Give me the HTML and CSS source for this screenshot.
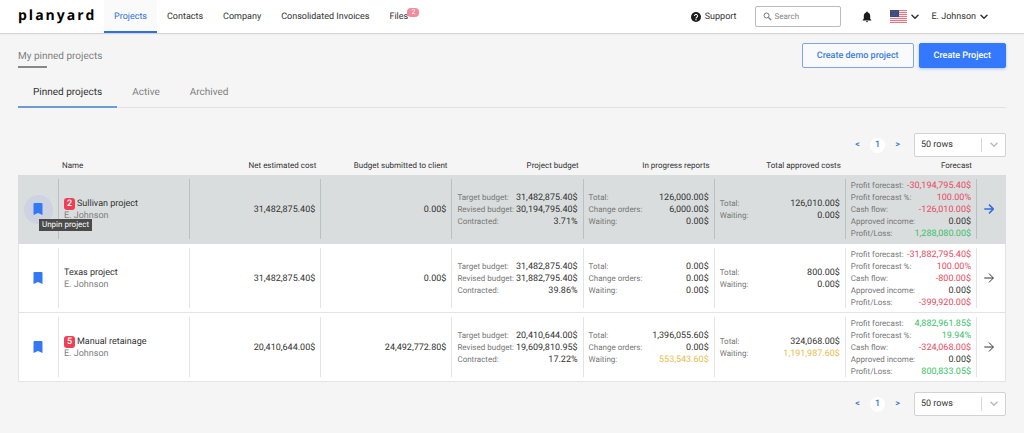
FILE: index.html
```html
<!DOCTYPE html>
<html lang="en">
<head>
  <meta charset="UTF-8" />
  <meta name="viewport" content="width=device-width, initial-scale=1" />
  <title>Planyard - Projects</title>
  <link rel="stylesheet" href="styles.css">
</head>
<body>
  <!-- shared icons -->
  <svg class="sprite" aria-hidden="true">
    <symbol id="bookmark" viewBox="0 0 10 12"><path d="M1.500 0h7A1 1 0 0 1 9.500 1v11L5 10 .5 12V1a1 1 0 0 1 1-1z" fill="#3478f6" /></symbol>
    <symbol id="arrow" viewBox="0 0 10 10"><path d="M.3 5h9M5 .6 9.400 5 5 9.400" fill="none" stroke="currentColor" /></symbol>
    <symbol id="chevron" viewBox="0 0 8 6"><path d="M1 1.200 4 4.200l3-3" fill="none" stroke="currentColor" stroke-width="1.500" stroke-linecap="round" stroke-linejoin="round" /></symbol>
  </svg>

  <header class="topbar">
    <a class="logo" href="#">planyard</a>
    <nav class="menu">
      <a class="active" href="#">Projects</a>
      <a href="#">Contacts</a>
      <a href="#">Company</a>
      <a href="#">Consolidated Invoices</a>
      <a class="files" href="#">Files<span class="count">2</span></a>
    </nav>
    <div class="tools">
      <a class="support" href="#">
        <svg width="10" height="10" viewBox="0 0 10 10"><circle cx="5" cy="5" r="5" fill="#1c1c1c" /><path d="M3.500 3.900a1.500 1.500 0 1 1 2.300 1.300C5.200 5.600 5 5.800 5 6.400" fill="none" stroke="#fff" stroke-width="1.100" /><circle cx="5" cy="7.800" r=".7" fill="#fff" /></svg>
        Support
      </a>
      <label class="search">
        <svg width="9" height="9" viewBox="0 0 9 9"><circle cx="3.500" cy="3.500" r="2.500" fill="none" stroke="#777" stroke-width="1" /><path d="m5.500 5.500 2.700 2.700" stroke="#777" stroke-width="1.200" /></svg>
        <input type="search" placeholder="Search" aria-label="Search">
      </label>
      <button class="plain bell" aria-label="Notifications">
        <svg width="10" height="12" viewBox="0 0 10 12"><path d="M5 .5c.5 0 .8.300.8.8v.3C7.400 2 8.200 3.300 8.200 5v2.700L9.300 9v.6H.7V9l1.100-1.300V5c0-1.700.8-3 2.400-3.400v-.3c0-.5.300-.8.8-.8zM3.900 10.200h2.200a1.100 1.100 0 0 1-2.200 0z" fill="#1c1c1c" /></svg>
      </button>
      <button class="plain" aria-label="Language">
        <svg width="17" height="13" viewBox="0 0 17 13">
          <path fill="#f3e9ec" d="M0 0h17v13H0z" />
          <path d="M0 .5h17M0 2.500h17M0 4.500h17M0 6.500h17M0 8.500h17M0 10.500h17M0 12.500h17" stroke="#d77c87" />
          <path fill="#3b4a7c" d="M0 0h9v7H0z" />
          <path d="M1 1.500h7M2 3.500h6M1 5.500h7" stroke="#6c78a0" stroke-width=".6" stroke-dasharray=".7 1" />
        </svg>
        <svg width="8" height="6"><use href="#chevron" /></svg>
      </button>
      <button class="plain">E. Johnson <svg width="8" height="6"><use href="#chevron" /></svg></button>
    </div>
  </header>

  <main>
    <div class="page-head">
      <h1>My pinned projects</h1>
      <div class="actions">
        <button class="btn">Create demo project</button>
        <button class="btn primary">Create Project</button>
      </div>
    </div>

    <nav class="tabs">
      <a class="active" href="#">Pinned projects</a>
      <a href="#">Active</a>
      <a href="#">Archived</a>
    </nav>

    <div class="pager">
      <a href="#" aria-label="Previous page">&lt;</a>
      <a class="current" href="#">1</a>
      <a href="#" aria-label="Next page">&gt;</a>
      <div class="rows-select">
        <select aria-label="Rows per page"><option>50 rows</option></select>
        <svg width="8" height="6"><use href="#chevron" /></svg>
      </div>
    </div>

    <table class="projects">
      <colgroup>
        <col class="col-pin"><col><col><col><col><col><col><col><col class="col-open">
      </colgroup>
      <thead>
        <tr>
          <th></th>
          <th class="name">Name</th>
          <th>Net estimated cost</th>
          <th>Budget submitted to client</th>
          <th>Project budget</th>
          <th>In progress reports</th>
          <th>Total approved costs</th>
          <th>Forecast</th>
          <th></th>
        </tr>
      </thead>
      <tbody>
        <tr class="hovered">
          <td><div class="cell pin"><button class="plain" aria-label="Unpin project"><svg width="10" height="12"><use href="#bookmark" /></svg></button><span class="tooltip">Unpin project</span></div></td>
          <td><div class="cell name"><span><b class="badge">2</b>Sullivan project</span><small>E. Johnson</small></div></td>
          <td><div class="cell sum">31,482,875.40$</div></td>
          <td><div class="cell sum">0.00$</div></td>
          <td><dl class="cell">
            <div><dt>Target budget:</dt><dd>31,482,875.40$</dd></div>
            <div><dt>Revised budget:</dt><dd>30,194,795.40$</dd></div>
            <div><dt>Contracted:</dt><dd>3.71%</dd></div>
          </dl></td>
          <td><dl class="cell">
            <div><dt>Total:</dt><dd>126,000.00$</dd></div>
            <div><dt>Change orders:</dt><dd>6,000.00$</dd></div>
            <div><dt>Waiting:</dt><dd>0.00$</dd></div>
          </dl></td>
          <td><dl class="cell">
            <div><dt>Total:</dt><dd>126,010.00$</dd></div>
            <div><dt>Waiting:</dt><dd>0.00$</dd></div>
          </dl></td>
          <td><dl class="cell">
            <div><dt>Profit forecast:</dt><dd class="red">-30,194,795.40$</dd></div>
            <div><dt>Profit forecast %:</dt><dd class="red">100.00%</dd></div>
            <div><dt>Cash flow:</dt><dd class="red">-126,010.00$</dd></div>
            <div><dt>Approved income:</dt><dd>0.00$</dd></div>
            <div><dt>Profit/Loss:</dt><dd class="green">1,288,080.00$</dd></div>
          </dl></td>
          <td><a class="cell open" href="#" aria-label="Open project"><svg width="10" height="10"><use href="#arrow" /></svg></a></td>
        </tr>
        <tr>
          <td><div class="cell pin"><button class="plain" aria-label="Unpin project"><svg width="10" height="12"><use href="#bookmark" /></svg></button></div></td>
          <td><div class="cell name"><span>Texas project</span><small>E. Johnson</small></div></td>
          <td><div class="cell sum">31,482,875.40$</div></td>
          <td><div class="cell sum">0.00$</div></td>
          <td><dl class="cell">
            <div><dt>Target budget:</dt><dd>31,482,875.40$</dd></div>
            <div><dt>Revised budget:</dt><dd>31,882,795.40$</dd></div>
            <div><dt>Contracted:</dt><dd>39.86%</dd></div>
          </dl></td>
          <td><dl class="cell">
            <div><dt>Total:</dt><dd>0.00$</dd></div>
            <div><dt>Change orders:</dt><dd>0.00$</dd></div>
            <div><dt>Waiting:</dt><dd>0.00$</dd></div>
          </dl></td>
          <td><dl class="cell">
            <div><dt>Total:</dt><dd>800.00$</dd></div>
            <div><dt>Waiting:</dt><dd>0.00$</dd></div>
          </dl></td>
          <td><dl class="cell">
            <div><dt>Profit forecast:</dt><dd class="red">-31,882,795.40$</dd></div>
            <div><dt>Profit forecast %:</dt><dd class="red">100.00%</dd></div>
            <div><dt>Cash flow:</dt><dd class="red">-800.00$</dd></div>
            <div><dt>Approved income:</dt><dd>0.00$</dd></div>
            <div><dt>Profit/Loss:</dt><dd class="red">-399,920.00$</dd></div>
          </dl></td>
          <td><a class="cell open" href="#" aria-label="Open project"><svg width="10" height="10"><use href="#arrow" /></svg></a></td>
        </tr>
        <tr>
          <td><div class="cell pin"><button class="plain" aria-label="Unpin project"><svg width="10" height="12"><use href="#bookmark" /></svg></button></div></td>
          <td><div class="cell name"><span><b class="badge">5</b>Manual retainage</span><small>E. Johnson</small></div></td>
          <td><div class="cell sum">20,410,644.00$</div></td>
          <td><div class="cell sum">24,492,772.80$</div></td>
          <td><dl class="cell">
            <div><dt>Target budget:</dt><dd>20,410,644.00$</dd></div>
            <div><dt>Revised budget:</dt><dd>19,609,810.95$</dd></div>
            <div><dt>Contracted:</dt><dd>17.22%</dd></div>
          </dl></td>
          <td><dl class="cell">
            <div><dt>Total:</dt><dd>1,396,055.60$</dd></div>
            <div><dt>Change orders:</dt><dd>0.00$</dd></div>
            <div><dt>Waiting:</dt><dd class="yellow">553,543.60$</dd></div>
          </dl></td>
          <td><dl class="cell">
            <div><dt>Total:</dt><dd>324,068.00$</dd></div>
            <div><dt>Waiting:</dt><dd class="yellow">1,191,987.60$</dd></div>
          </dl></td>
          <td><dl class="cell">
            <div><dt>Profit forecast:</dt><dd class="green">4,882,961.85$</dd></div>
            <div><dt>Profit forecast %:</dt><dd class="green">19.94%</dd></div>
            <div><dt>Cash flow:</dt><dd class="red">-324,068.00$</dd></div>
            <div><dt>Approved income:</dt><dd>0.00$</dd></div>
            <div><dt>Profit/Loss:</dt><dd class="green">800,833.05$</dd></div>
          </dl></td>
          <td><a class="cell open" href="#" aria-label="Open project"><svg width="10" height="10"><use href="#arrow" /></svg></a></td>
        </tr>
      </tbody>
    </table>

    <div class="pager bottom">
      <a href="#" aria-label="Previous page">&lt;</a>
      <a class="current" href="#">1</a>
      <a href="#" aria-label="Next page">&gt;</a>
      <div class="rows-select">
        <select aria-label="Rows per page"><option>50 rows</option></select>
        <svg width="8" height="6"><use href="#chevron" /></svg>
      </div>
    </div>
  </main>
</body>
</html>
```
FILE: styles.css
```css
* {
  margin: 0;
  padding: 0;
  box-sizing: border-box;
}

body {
  font-family: Roboto, "Liberation Sans", sans-serif;
  font-size: 9px;
  line-height: 12px;
  text-rendering: geometricPrecision;
  color: #333;
  background-color: #f5f5f5;
}

a {
  color: inherit;
  text-decoration: none;
}

button, input, select {
  font: inherit;
  color: inherit;
  text-rendering: inherit;
}

svg {
  flex: none;
  display: block;
}

.sprite {
  display: none;
}

.plain {
  display: flex;
  align-items: center;
  gap: 4px;
  border: none;
  background: none;
  cursor: pointer;
}

/* top bar */
.topbar {
  display: flex;
  height: 33px;
  padding: 0 36px 0 18px;
  background-color: #fff;
  box-shadow: 0 1px 1px #d4d4d4;
}

.logo {
  width: 86px;
  font-family: "Open Sans", sans-serif;
  font-size: 14px;
  font-weight: 700;
  line-height: 32px;
  letter-spacing: 2px;
  color: #000;
}

.menu {
  display: flex;
}

.menu a {
  padding: 0 10px;
  line-height: 34px;
}

.menu .active {
  color: #2f6fe0;
  background-color: #fafafa;
  border-bottom: 2px solid #2f6fe0;
}

.files {
  position: relative;
}

.count {
  position: absolute;
  top: 8px;
  left: 28px;
  width: 12px;
  border-radius: 4px;
  background-color: #f28b9b;
  color: #fff;
  font-size: 7px;
  line-height: 9px;
  text-align: center;
}

.tools {
  display: flex;
  align-items: center;
  gap: 13px;
  margin-left: auto;
}

.support {
  display: flex;
  align-items: center;
  gap: 4px;
}

.search {
  display: flex;
  align-items: center;
  gap: 3px;
  width: 86px;
  height: 21px;
  margin: 0 8px 0 5px;
  padding: 0 7px;
  border: 1px solid #bbb;
  border-radius: 2px;
  font-size: 8px;
}

.search input {
  width: 100%;
  border: none;
  outline: none;
  background: none;
}

.search input::placeholder {
  color: #888;
}

.bell {
  margin-right: 5px;
}

/* page heading */
main {
  padding: 10px 18px;
}

.page-head {
  display: flex;
  justify-content: space-between;
}

h1 {
  padding-top: 8px;
  font-size: 10px;
  font-weight: normal;
  color: #808080;
}

h1::after {
  content: "";
  display: block;
  width: 29px;
  height: 2px;
  margin-top: 3px;
  background-color: #888;
}

.actions {
  display: flex;
  gap: 5px;
}

.btn {
  height: 25px;
  padding: 1px 14px 0;
  border: 1px solid #7fa6df;
  border-radius: 2px;
  background-color: #f9fafb;
  color: #3f7fdc;
  font-weight: 500;
  cursor: pointer;
}

.primary {
  border-color: #3478ff;
  background-color: #3478ff;
  color: #fff;
  box-shadow: 0 1px 3px #a9c4f5;
}

.tabs {
  display: flex;
  margin-top: 10px;
  border-bottom: 1px solid #e2e2e2;
  font-size: 10px;
  color: #808080;
}

.tabs a {
  padding: 9px 15px 7px;
  margin-bottom: -1px;
  border-bottom: 2px solid transparent;
}

.tabs .active {
  color: #333;
  border-color: #6e9bd8;
}

/* pagination */
.pager {
  display: flex;
  justify-content: flex-end;
  align-items: center;
  gap: 5px;
  margin-top: 25px;
}

.pager a {
  width: 15px;
  line-height: 15px;
  border-radius: 50%;
  text-align: center;
  font-weight: 500;
  color: #3f73d0;
}

.pager .current {
  background-color: #fff;
}

.bottom {
  margin-top: 10px;
}

.rows-select {
  display: grid;
  align-items: center;
  width: 92px;
  margin-left: 4px;
}

.rows-select select, .rows-select svg {
  grid-area: 1 / 1;
}

.rows-select select {
  height: 24px;
  padding: 0 6px;
  border: 1px solid #d2d2d2;
  border-radius: 2px;
  background-color: #fff;
  appearance: none;
}

.rows-select svg {
  box-sizing: content-box;
  justify-self: end;
  padding: 4px 8px;
  border-left: 1px solid #d8d8d8;
  color: #bbb;
  pointer-events: none;
}

/* projects table */
.projects {
  width: 100%;
  table-layout: fixed;
  border-collapse: separate;
  border-spacing: 0;
}

.col-pin {
  width: 41px;
}

.col-open {
  width: 29px;
}

th {
  height: 18px;
  padding-right: 5px;
  font-size: 8px;
  font-weight: normal;
  line-height: 10px;
  text-align: right;
  white-space: nowrap;
}

th.name {
  padding-left: 3px;
  text-align: left;
}

tbody td {
  padding: 4px 0;
  background-color: #fff;
  border-bottom: 1px solid #e4e4e4;
}

td:first-child {
  border-left: 1px solid #e4e4e4;
}

td:last-child {
  border-right: 1px solid #e4e4e4;
}

.hovered td {
  background-color: #d9dddd;
  border-color: #d9dddd;
}

.cell {
  display: flex;
  flex-direction: column;
  justify-content: center;
  height: 60px;
  padding: 2px 5px 0;
  border-right: 1px solid #e4e4e4;
  white-space: nowrap;
}

.hovered .cell {
  border-color: #b9c2c2;
}

.cell.pin {
  position: relative;
  align-items: center;
  padding: 0 6px 0 5px;
}

.pin .plain {
  justify-content: center;
  width: 29px;
  height: 29px;
  border-radius: 50%;
}

.hovered .pin .plain {
  background-color: #cdd3e0;
}

.tooltip {
  position: absolute;
  top: 40px;
  left: 20px;
  z-index: 1;
  padding: 0 3px;
  background-color: #4a4a4a;
  color: #fff;
  font-size: 8px;
}

.sum {
  align-items: flex-end;
}

.cell small {
  font-size: 9px;
  color: #808080;
}

.badge {
  display: inline-block;
  width: 11px;
  margin-right: 2px;
  border-radius: 3px;
  background-color: #ee3f55;
  color: #fff;
  font-weight: 500;
  line-height: 12px;
  text-align: center;
}

.cell > div {
  display: flex;
  justify-content: space-between;
}

dt {
  font-size: 8px;
  color: #777;
}

.red {
  color: #e84a62;
}

.green {
  color: #3cc069;
}

.yellow {
  color: #e9bd4e;
}

.cell.open {
  align-items: center;
  padding: 0 9px 0 5px;
  border: none;
}

.hovered .open {
  color: #2f6fe0;
  stroke-width: 1.5;
}
```
